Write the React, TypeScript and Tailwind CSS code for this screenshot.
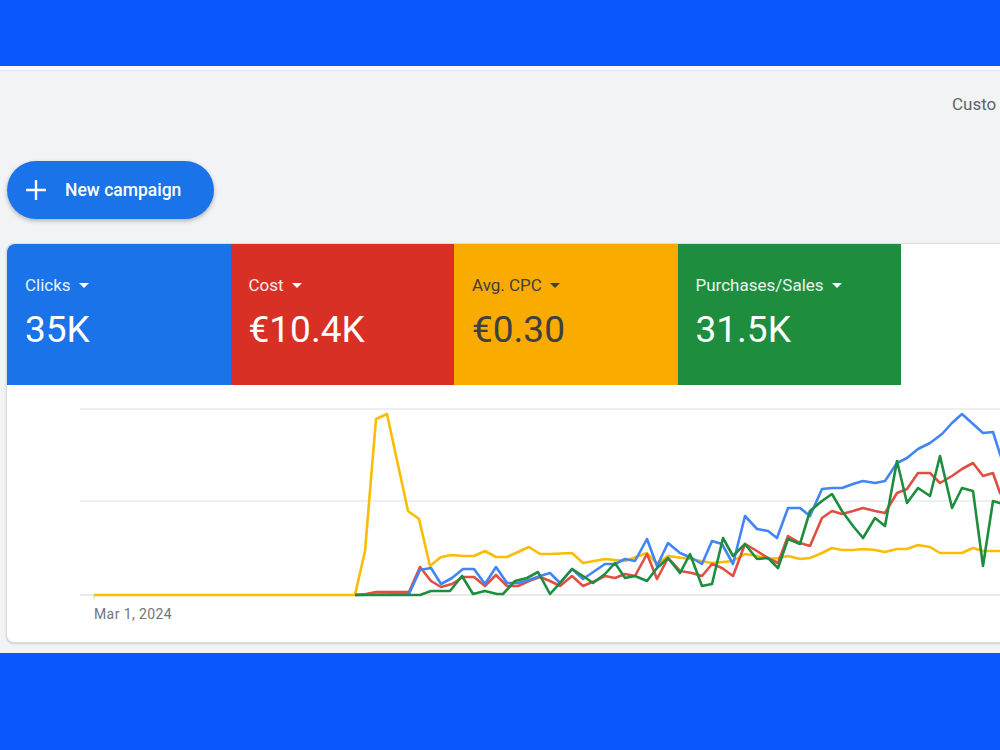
import type { ReactNode } from "react";

type Pt = [number, number];

const YELLOW: Pt[] = [
  [94, 594], [355, 594], [365, 550], [376, 418], [387, 413], [408, 510], [419, 518], [430, 565],
  [441, 556], [452, 554], [463, 555], [474, 555], [485, 550], [496, 556], [507, 556], [518, 551],
  [529, 546], [540, 553], [550, 553], [572, 552], [583, 562], [605, 558], [625, 560], [647, 552],
  [657, 563], [668, 555], [690, 558], [712, 562], [733, 560], [745, 553], [757, 555], [770, 558],
  [778, 557], [788, 555], [800, 558], [810, 557], [822, 552], [832, 547], [842, 549], [853, 549],
  [863, 548], [875, 549], [885, 551], [897, 548], [907, 548], [918, 544], [930, 546], [940, 552],
  [952, 552], [962, 552], [973, 547], [983, 550], [1010, 550],
];

const BLUE: Pt[] = [
  [355, 594], [409, 593], [420, 569], [431, 567], [441, 583], [452, 577], [463, 568], [474, 568],
  [485, 583], [496, 566], [507, 582], [518, 582], [529, 579], [540, 575], [550, 572], [560, 582],
  [572, 568], [583, 578], [605, 563], [615, 563], [625, 558], [635, 560], [647, 538], [657, 565],
  [668, 542], [680, 552], [692, 557], [702, 563], [712, 540], [722, 543], [733, 563], [745, 515],
  [757, 528], [768, 530], [777, 537], [788, 507], [800, 507], [810, 515], [822, 488], [832, 487],
  [842, 487], [853, 483], [863, 480], [875, 482], [885, 480], [897, 462], [907, 457], [918, 448],
  [930, 442], [942, 433], [952, 422], [962, 413], [973, 423], [983, 432], [993, 431], [1000, 453],
  [1010, 480],
];

const RED: Pt[] = [
  [355, 594], [366, 593], [376, 591], [409, 591], [420, 566], [431, 580], [441, 586], [452, 583],
  [463, 576], [474, 576], [485, 585], [496, 574], [507, 585], [518, 585], [529, 580], [540, 576],
  [550, 580], [560, 585], [572, 575], [583, 585], [595, 580], [605, 575], [615, 577], [625, 573],
  [635, 575], [647, 553], [657, 578], [668, 557], [680, 570], [692, 572], [702, 575], [712, 563],
  [722, 567], [733, 575], [745, 543], [757, 550], [768, 557], [778, 562], [788, 535], [800, 542],
  [810, 545], [822, 517], [832, 510], [842, 513], [853, 510], [863, 507], [875, 510], [885, 512],
  [897, 492], [907, 488], [918, 472], [930, 472], [940, 482], [952, 475], [962, 468], [973, 462],
  [983, 475], [993, 472], [1000, 492], [1010, 500],
];

const GREEN: Pt[] = [
  [355, 594], [420, 594], [431, 590], [450, 590], [462, 575], [473, 593], [485, 590], [497, 593],
  [503, 593], [515, 580], [527, 577], [538, 571], [550, 593], [560, 582], [572, 568], [583, 575],
  [593, 582], [605, 573], [615, 562], [625, 577], [635, 575], [647, 580], [657, 567], [668, 557],
  [680, 572], [690, 553], [702, 585], [712, 583], [723, 537], [733, 555], [745, 543], [757, 558],
  [768, 557], [778, 567], [788, 538], [800, 543], [810, 510], [822, 500], [832, 493], [842, 510],
  [853, 525], [863, 537], [875, 517], [885, 525], [897, 460], [907, 502], [918, 487], [930, 495],
  [940, 455], [952, 507], [962, 487], [973, 490], [983, 565], [993, 500], [1010, 505],
];

const toPoints = (pts: Pt[]) => pts.map(([x, y]) => `${x},${y}`).join(" ");

function Caret({ dark }: { dark?: boolean }) {
  return (
    <svg width="10" height="5" viewBox="0 0 10 5" className="ml-2">
      <path d="M0 0 L10 0 L5 5 Z" fill={dark ? "#3c4043" : "#ffffff"} />
    </svg>
  );
}

function Tile({
  label,
  value,
  bg,
  dark,
  rounded,
}: {
  label: string;
  value: ReactNode;
  bg: string;
  dark?: boolean;
  rounded?: boolean;
}) {
  return (
    <div className={`flex h-full w-[223.5px] flex-col pl-[18px] pt-[30px] ${bg} ${rounded ? "rounded-tl-lg" : ""}`}>
      <div className={`flex items-center text-[17px] leading-[22px] ${dark ? "text-[#3c4043]" : "text-white/90"}`}>
        {label}
        <Caret dark={dark} />
      </div>
      <div className={`mt-[12px] text-[37px] leading-[44px] ${dark ? "text-[#3c4043]" : "text-white"}`}>{value}</div>
    </div>
  );
}

export default function App() {
  return (
    <div className="flex h-[750px] w-[1000px] flex-col overflow-hidden bg-[#0a56ff] font-['Roboto','Liberation_Sans',sans-serif]">
      <div className="h-[66px] shrink-0" />
      <div className="flex h-[587px] shrink-0 flex-col bg-[#f1f3f4]">
        <div className="h-[5px] border-b border-[#e6e8eb] bg-[#f7f8f9]" />

        <div className="flex h-[68px] items-center">
          <div className="ml-auto w-[48px] overflow-hidden whitespace-nowrap text-[17px] text-[#5f6368]">Custo</div>
        </div>

        <div className="mt-[22px] pl-[7px]">
          <button
            type="button"
            className="flex h-[58px] w-[207px] items-center rounded-full bg-[#1a73e8] pl-[18px] text-white shadow-[0_2px_4px_rgba(60,64,67,0.35)]"
          >
            <svg width="22" height="22" viewBox="0 0 22 22">
              <path d="M11 1v20M1 11h20" stroke="#fff" strokeWidth="2.4" />
            </svg>
            <span className="ml-[18px] text-[17.5px] font-medium">New campaign</span>
          </button>
        </div>

        <div className="ml-[6px] mt-[24px] flex h-[400px] w-[1100px] flex-col rounded-lg border border-[#dadce0] bg-white shadow-[0_1px_2px_rgba(60,64,67,0.2)]">
          <div className="flex h-[141px] shrink-0">
            <Tile label="Clicks" value="35K" bg="bg-[#1a73e8]" rounded />
            <Tile label="Cost" value="€10.4K" bg="bg-[#d93025]" />
            <Tile label="Avg. CPC" value="€0.30" bg="bg-[#f9ab00]" dark />
            <Tile label="Purchases/Sales" value="31.5K" bg="bg-[#1e8e3e]" />
          </div>

          <div className="flex-1">
            <svg width="1098" height="257" viewBox="7 384 1098 257">
              <line x1="80" y1="408" x2="1106" y2="408" stroke="#e8eaed" strokeWidth="1.5" />
              <line x1="80" y1="500" x2="1106" y2="500" stroke="#e8eaed" strokeWidth="1.5" />
              <line x1="80" y1="594" x2="1106" y2="594" stroke="#e0e2e5" strokeWidth="1.5" />
              <line x1="94" y1="594" x2="94" y2="598" stroke="#d5d7da" strokeWidth="1" />
              <polyline points={toPoints(YELLOW)} fill="none" stroke="#fbbc04" strokeWidth="2.6" strokeLinejoin="round" />
              <polyline points={toPoints(RED)} fill="none" stroke="#df4f44" strokeWidth="2.6" strokeLinejoin="round" />
              <polyline points={toPoints(BLUE)} fill="none" stroke="#4285f4" strokeWidth="2.6" strokeLinejoin="round" />
              <polyline points={toPoints(GREEN)} fill="none" stroke="#1e8e3e" strokeWidth="2.6" strokeLinejoin="round" />
              <text x="94" y="618" fontSize="14" fill="#70757a" fontFamily="Roboto, 'Liberation Sans', sans-serif" letterSpacing="0.4">
                Mar 1, 2024
              </text>
            </svg>
          </div>
        </div>
      </div>
    </div>
  );
}
